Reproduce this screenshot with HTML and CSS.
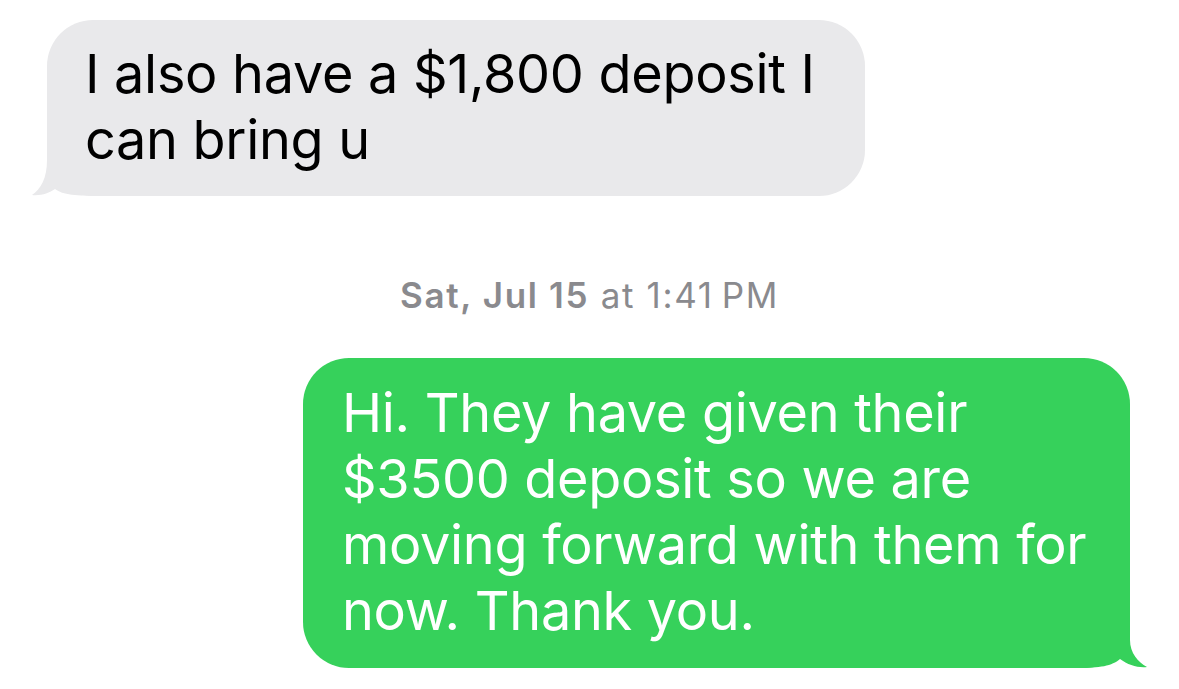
FILE: index.html
```html
<!DOCTYPE html>
<html>
<head>
<meta charset="utf-8">
<link rel="stylesheet" href="styles.css">
</head>
<body>
<div class="thread">
  <div class="row row-in">
    <div class="bubble bubble-in">
      <svg class="tail tail-in" width="70" height="50" viewBox="0 0 70 50"><path d="M15 0 L15 14 C15 32 9 43 0 49 C 9 50 17 47 23 43 C 31 49 44 50 70 50 L70 0 Z" fill="#e9e9eb"/></svg>
      <p class="msg">I also have a $1,800 deposit I<br>can bring u</p>
    </div>
  </div>
  <div class="stamp"><span class="stamp-day">Sat, Jul 15</span> at 1:41&#8239;PM</div>
  <div class="row row-out">
    <div class="bubble bubble-out">
      <svg class="tail tail-out" width="70" height="50" viewBox="0 0 70 50"><path d="M17 0 L17 22 C17 35 9 44 0 49 C 9 50 19 47 27 41 C 35 48 47 50 70 50 L70 0 Z" fill="#36d15b"/></svg>
      <p class="msg">Hi. They have given their<br>$3500 deposit so we are<br>moving forward with them for<br>now. Thank you.</p>
    </div>
  </div>
</div>
</body>
</html>
```
FILE: styles.css
```css
html, body {
  margin: 0;
  padding: 0;
  background: #ffffff;
}
body {
  width: 1179px;
  height: 689px;
  overflow: hidden;
  font-family: Inter, "Liberation Sans", sans-serif;
}
.thread {
  display: flex;
  flex-direction: column;
  padding-top: 20px;
}
.row {
  display: flex;
}
.row-in {
  padding-left: 47px;
}
.row-out {
  justify-content: flex-end;
  padding-right: 49px;
  margin-top: 41px;
}
.bubble {
  position: relative;
  border-radius: 46px;
}
.bubble-in {
  width: 818px;
  height: 176px;
  box-sizing: border-box;
  background: #e9e9eb;
  color: #000000;
  padding: 21px 0 0 38px;
}
.bubble-out {
  width: 827px;
  height: 310px;
  box-sizing: border-box;
  background: #36d15b;
  color: #ffffff;
  padding: 22px 0 0 39px;
}
.msg {
  position: relative;
  margin: 0;
  font-size: 54px;
  line-height: 66px;
  letter-spacing: -0.3px;
}
.tail {
  position: absolute;
  bottom: 0;
  display: block;
}
.tail-in {
  left: -15px;
}
.tail-out {
  right: -17px;
  transform: scaleX(-1);
}
.stamp {
  margin-top: 77px;
  text-align: center;
  color: #8a8a8e;
  font-size: 35px;
  line-height: 44px;
  letter-spacing: 1.65px;
}
.stamp-day {
  font-weight: 600;
}
```
